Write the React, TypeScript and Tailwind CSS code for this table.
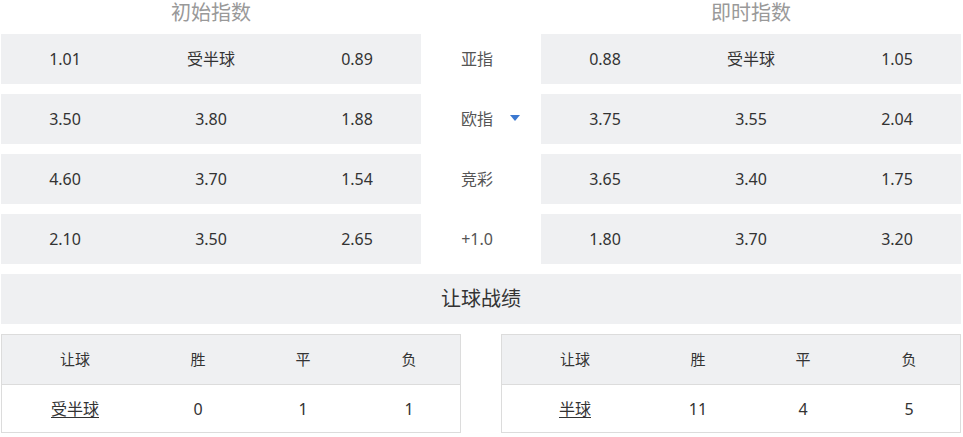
const font = "font-['Noto_Sans','Noto_Sans_CJK_SC',sans-serif]";

const initial = [
  ["1.01", "受半球", "0.89"],
  ["3.50", "3.80", "1.88"],
  ["4.60", "3.70", "1.54"],
  ["2.10", "3.50", "2.65"],
];

const live = [
  ["0.88", "受半球", "1.05"],
  ["3.75", "3.55", "2.04"],
  ["3.65", "3.40", "1.75"],
  ["1.80", "3.70", "3.20"],
];

const labels = ["亚指", "欧指", "竞彩", "+1.0"];

function OddsRow({ cells }: { cells: string[] }) {
  return (
    <div className="mb-[10px] grid h-[50px] grid-cols-[128px_1fr_128px] items-center bg-[#eff0f2] text-[16px] text-[#333]">
      {cells.map((c, i) => (
        <span key={i} className="text-center">
          {c}
        </span>
      ))}
    </div>
  );
}

function RecordTable({ label, win, draw, lose }: { label: string; win: string; draw: string; lose: string }) {
  return (
    <div className="w-[460px] border border-[#dcdcdc] text-[#333]">
      <div className="grid h-[50px] grid-cols-[146px_100px_110px_1fr] items-center border-b border-[#dcdcdc] bg-[#eff0f2] text-[15px]">
        <span className="text-center">让球</span>
        <span className="text-center">胜</span>
        <span className="text-center">平</span>
        <span className="text-center">负</span>
      </div>
      <div className="grid h-[47px] grid-cols-[146px_100px_110px_1fr] items-center text-[16px]">
        <span className="text-center">
          <span className="underline underline-offset-2">{label}</span>
        </span>
        <span className="text-center">{win}</span>
        <span className="text-center">{draw}</span>
        <span className="text-center">{lose}</span>
      </div>
    </div>
  );
}

export default function App() {
  return (
    <div className={`h-[437px] w-[963px] bg-white pl-px ${font}`}>
      <div className="grid w-[960px] grid-cols-[420px_120px_420px]">
        <div className="h-[34px] text-center text-[20px] leading-[26px] text-[#999]">初始指数</div>
        <div />
        <div className="h-[34px] text-center text-[20px] leading-[26px] text-[#999]">即时指数</div>
        {initial.map((row, i) => (
          <div key={i} className="contents">
            <OddsRow cells={row} />
            <div className="relative mb-[10px] flex h-[50px] items-center justify-center pr-[8px] text-[16px] text-[#555]">
              {labels[i]}
              {i === 1 && (
                <span className="absolute left-[89px] top-[21px] h-0 w-0 border-x-[5px] border-t-[6px] border-x-transparent border-t-[#3b78d0]" />
              )}
            </div>
            <OddsRow cells={live[i]} />
          </div>
        ))}
      </div>
      <div className="flex h-[50px] w-[960px] items-center justify-center bg-[#eff0f2] text-[20px] text-[#333]">
        让球战绩
      </div>
      <div className="mt-[10px] flex w-[960px] justify-between">
        <RecordTable label="受半球" win="0" draw="1" lose="1" />
        <RecordTable label="半球" win="11" draw="4" lose="5" />
      </div>
    </div>
  );
}
